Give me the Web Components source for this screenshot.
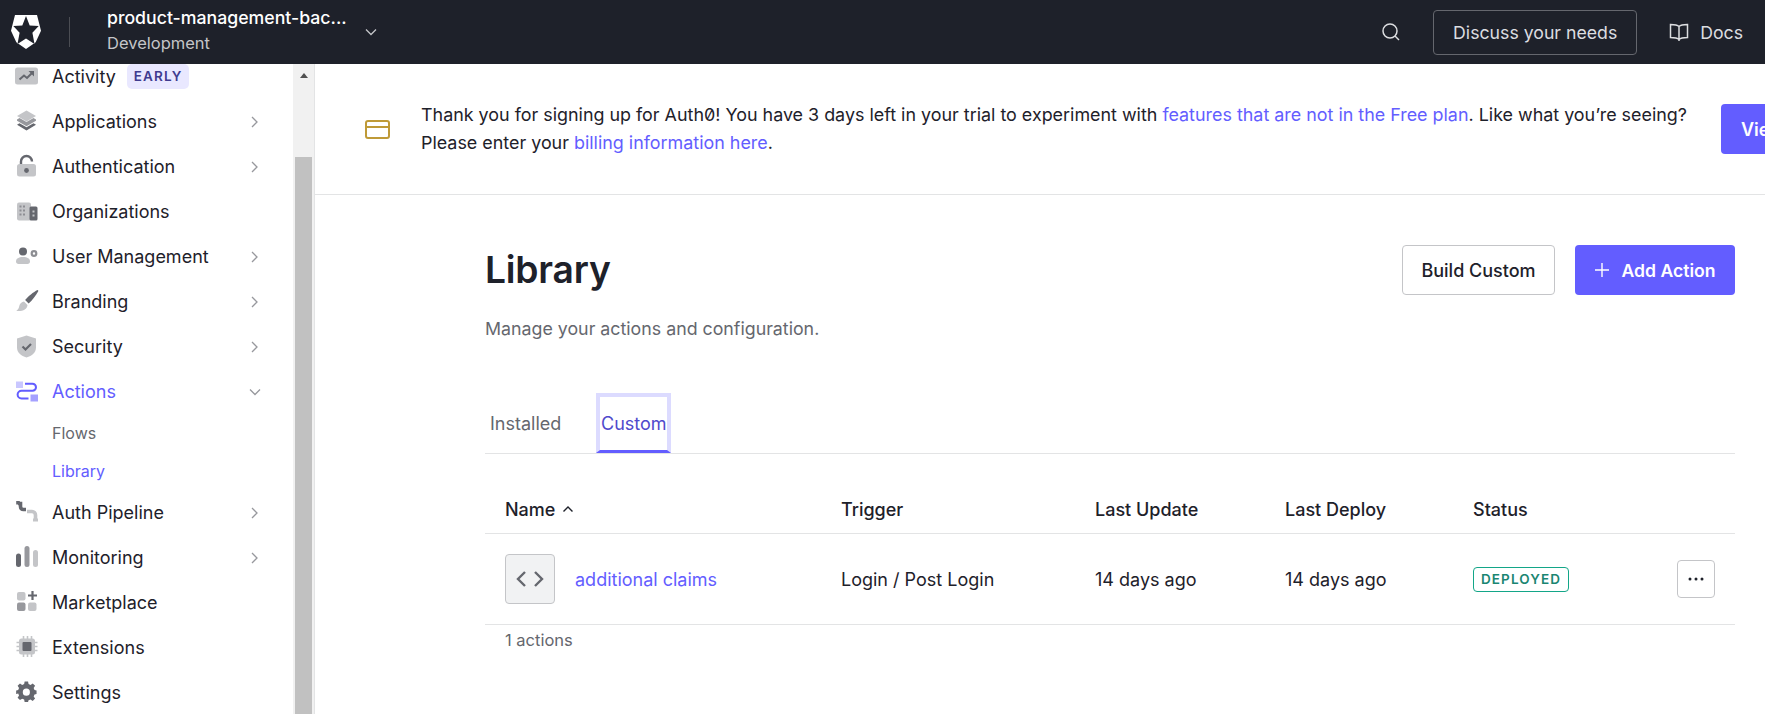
<!doctype html>
<html lang="en">
<head>
<meta charset="utf-8">
<title>Library</title>
<style>
  html, body { margin: 0; height: 100%; overflow: hidden; }
  body { font-family: Inter, "Liberation Sans", sans-serif; color: #1e212a; background: #fff; }
  #app { display: flex; flex-direction: column; height: 714px; }
  #below { display: flex; flex: 1; min-height: 0; }
</style>
</head>
<body>
<div id="app">
  <top-bar></top-bar>
  <div id="below">
    <side-bar>
      <nav-item icon="activity">Activity<nav-badge slot="extra">EARLY</nav-badge></nav-item>
      <nav-item icon="apps" arrow="right">Applications</nav-item>
      <nav-item icon="lock" arrow="right">Authentication</nav-item>
      <nav-item icon="orgs">Organizations</nav-item>
      <nav-item icon="users" arrow="right">User Management</nav-item>
      <nav-item icon="brush" arrow="right">Branding</nav-item>
      <nav-item icon="shield" arrow="right">Security</nav-item>
      <nav-item icon="actions" arrow="down" active>Actions</nav-item>
      <nav-sub>Flows</nav-sub>
      <nav-sub active>Library</nav-sub>
      <nav-item icon="pipe" arrow="right">Auth Pipeline</nav-item>
      <nav-item icon="bars" arrow="right">Monitoring</nav-item>
      <nav-item icon="market">Marketplace</nav-item>
      <nav-item icon="chip">Extensions</nav-item>
      <nav-item icon="gear">Settings</nav-item>
    </side-bar>
    <main-area>
      <trial-banner></trial-banner>
      <library-page></library-page>
    </main-area>
  </div>
</div>

<script>
const ICONS = {
  activity: `<g transform="translate(-1 1.500)"><rect x="0" y="1" width="23" height="17" rx="2.500" fill="#c4c5c8"/><path d="M4.500 13l4.500-4 3 2.500 5-5" fill="none" stroke="#65676e" stroke-width="2"/><path d="M13.500 4.500h5.500v5.500z" fill="#65676e"/></g>`,
  apps: `<g transform="translate(-1 .500)"><path d="M11.500 0l9.500 5.500-9.500 5.500L2 5.500z" fill="#c4c5c8"/><path d="M4.500 7.500l7 4 7-4 2.500 1.500 0 1.200-9.500 5.500L2 10.200V9z" fill="#97989d"/><path d="M4.500 12.800l7 4 7-4 2.500 1.500-9.500 5.700L2 14.300z" fill="#65676e"/></g>`,
  lock: `<g transform="translate(-1 0)"><rect x="2" y="9" width="19" height="12.500" rx="2.500" fill="#c4c5c8"/><path d="M6 9V6.500a5.500 5.500 0 0 1 11 0" fill="none" stroke="#65676e" stroke-width="2.400"/><circle cx="11.500" cy="15.500" r="2.400" fill="#65676e"/></g>`,
  orgs: `<g transform="translate(-.500 2.500)"><rect x="1.500" y="0" width="14" height="18" rx="2" fill="#c4c5c8"/><rect x="14" y="4" width="8" height="14" rx="1.500" fill="#65676e"/><g fill="#8d8e93"><rect x="4" y="3" width="2" height="2"/><rect x="7.500" y="3" width="2" height="2"/><rect x="4" y="7" width="2" height="2"/><rect x="7.500" y="7" width="2" height="2"/><rect x="4" y="11" width="2" height="2"/><rect x="7.500" y="11" width="2" height="2"/></g><rect x="17" y="8" width="2" height="2" fill="#c4c5c8"/><rect x="17" y="12" width="2" height="2" fill="#c4c5c8"/></g>`,
  users: `<g transform="translate(0 2)"><circle cx="7" cy="4.500" r="4" fill="#65676e"/><path d="M0 14.500c0-3 2.500-4.500 7-4.500s7 1.500 7 4.500c0 1.500-1 2.500-2.500 2.500h-9C1 17 0 16 0 14.500z" fill="#c4c5c8"/><circle cx="18" cy="6.500" r="2.300" fill="none" stroke="#8d8e93" stroke-width="2.200"/></g>`,
  brush: `<path d="M21.500 0c.8 0 1 .8.6 1.500-2 3.800-6 9-9.500 12l-3.500-3.500C12 6.500 17.500 2 21.500 0z" fill="#65676e"/><path d="M8 11.500l3.500 3.500c-.5 4.500-4.500 6.500-11.200 6 2-1.500 2.500-3 3-5 .5-2.500 2.500-4.300 4.700-4.500z" fill="#c4c5c8"/>`,
  shield: `<g transform="translate(-1 .500)"><path d="M11.500 0l9.500 3v9c0 5-4 8.500-9.500 10C6 20.500 2 17 2 12V3z" fill="#c4c5c8"/><path d="M7.500 11l3 3 5.500-5.500" fill="none" stroke="#65676e" stroke-width="2.200"/></g>`,
  actions: `<g transform="translate(0 1.500)"><rect x="0" y="0" width="7" height="6.500" fill="#c9c7ff"/><rect x="14.500" y="13" width="7.500" height="7" fill="#a5a1ff"/><path d="M9 2.200h7.500a3.300 3.300 0 0 1 0 7H5.500a3.700 3.700 0 0 0 0 7.800h7" fill="none" stroke="#635dff" stroke-width="2"/></g>`,
  pipe: `<path d="M2 0v3.500M2 2.500h2.500v3c0 2 1 3 3 3h2.500" fill="none" stroke="#65676e" stroke-width="3.600"/><path d="M11 10.500h5c2 0 3.500 1.500 3.500 3.500v5" fill="none" stroke="#c4c5c8" stroke-width="3.600"/><rect x="17" y="17.500" width="5" height="3" fill="#c4c5c8"/>`,
  bars: `<rect x="0" y="7.500" width="5" height="13.500" rx="2.500" fill="#65676e"/><rect x="8.500" y="0" width="5" height="21" rx="2.500" fill="#97989d"/><rect x="17" y="4" width="5" height="17" rx="2.500" fill="#c4c5c8"/>`,
  market: `<rect x="1" y="1" width="8.500" height="8.500" rx="2" fill="#c4c5c8"/><path d="M16.500 0v9M12 4.500h9" stroke="#65676e" stroke-width="2.200"/><rect x="1" y="11.500" width="8.500" height="8.500" rx="2" fill="#97989d"/><rect x="12" y="11.500" width="8.500" height="8.500" rx="2" fill="#c4c5c8"/>`,
  chip: `<g stroke="#c4c5c8" stroke-width="1.600"><path d="M7 0v21M11 0v21M15 0v21M0 6.500h21M0 10.500h21M0 14.500h21" transform="translate(.5 0)"/></g><rect x="3" y="2.500" width="16" height="16" rx="2.500" fill="#c4c5c8"/><rect x="6.500" y="6" width="9" height="9" rx="1" fill="#65676e"/>`,
  gear: `<path fill="#65676e" fill-rule="evenodd" d="M9 0h4l.6 3 2.300 1 2.600-1.700 2.800 2.800L19.600 7.700l1 2.300 2.400.6v4l-2.400.6-1 2.300 1.700 2.600-2.800 2.800-2.600-1.700-2.300 1L13 24H9l-.6-2.800-2.300-1-2.600 1.700-2.800-2.800 1.700-2.600-1-2.300L-1 14.600v-4l2.400-.6 1-2.300L.7 5.100l2.800-2.800 2.600 1.700 2.300-1zM11 8.300a4.200 4.200 0 1 0 0 8.400 4.200 4.200 0 0 0 0-8.400z" transform="translate(1 .5) scale(.85)"/>`,
};

class TopBar extends HTMLElement {
  constructor() {
    super();
    this.attachShadow({ mode: "open" });
  }

  connectedCallback() {
    this.shadowRoot.innerHTML = `
      <style>
        :host { display: flex; align-items: center; flex: none; height: 64px; background: #1e212a; color: #fff; font-size: 17.700px; }
        .logo { margin-left: 11px; width: 30px; height: 34px; display: block; }
        .sep { width: 1px; height: 30px; background: #4b4d53; margin: 0 37px 0 28px; }
        .tenant { display: flex; flex-direction: column; gap: 1px; width: 246px; margin-bottom: 4px; white-space: nowrap; }
        .name { font-weight: 500; line-height: 24px; }
        .env { font-size: 16.500px; line-height: 24px; color: #c4c5c8; }
        .caret { margin-left: 11px; }
        .spacer { flex: 1; }
        .discuss { box-sizing: border-box; height: 45px; width: 204px; display: flex; align-items: center; justify-content: center; border: 1px solid #65676e; border-radius: 4px; color: #dcdde0; margin: 0 32px 0 32px; }
        .docs { display: flex; align-items: center; gap: 11px; color: #dcdde0; margin-right: 22px; }
      </style>
      <svg class="logo" viewBox="0 0 30 34"><path fill="#fff" fill-rule="evenodd" d="M4 0h22l4 15.700-5.300 11.600L15 34 5.300 27.300 0 15.700zM15 1L11.300 10.500 2.300 11 8.600 17.800 6.500 29 15 23.500 23.500 29 21.400 17.800 27.700 11 18.700 10.500z"/></svg>
      <span class="sep"></span>
      <div class="tenant">
        <span class="name">product-management-bac...</span>
        <span class="env">Development</span>
      </div>
      <svg class="caret" width="14" height="14" viewBox="0 0 14 14" fill="none" stroke="#c4c5c8" stroke-width="1.300"><path d="M2 4.500l5 5 5-5"/></svg>
      <span class="spacer"></span>
      <svg width="20" height="20" viewBox="0 0 20 20" fill="none" stroke="#dcdde0" stroke-width="1.500"><circle cx="9" cy="9" r="7"/><path d="M14 14l4 4"/></svg>
      <span class="discuss">Discuss your needs</span>
      <span class="docs">
        <svg width="20" height="19" viewBox="0 0 20 19" fill="none" stroke="#dcdde0" stroke-width="1.500"><path d="M10 3.500C8.500 2 6 1.500 1.500 1.500v13c4.500 0 7 .5 8.500 2 1.500-1.500 4-2 8.500-2v-13C14 1.500 11.500 2 10 3.500zM10 3.500V18"/></svg>
        Docs
      </span>
    `;
  }
}

class SideBar extends HTMLElement {
  constructor() {
    super();
    this.attachShadow({ mode: "open" });
  }

  connectedCallback() {
    this.shadowRoot.innerHTML = `
      <style>
        :host { display: flex; flex: none; width: 314px; border-right: 1px solid #e3e4e5; overflow: hidden; }
        .list { flex: 1; display: flex; flex-direction: column; margin-top: -10px; min-width: 0; }
        .track { flex: none; width: 21px; background: #f1f1f1; display: flex; flex-direction: column; align-items: center; }
        .up { width: 0; height: 0; border: 4.500px solid transparent; border-top: 0; border-bottom: 5px solid #505050; margin-top: 9px; }
        .thumb { width: 17px; flex: 1; margin-top: 79px; background: #c1c1c1; }
      </style>
      <div class="list"><slot></slot></div>
      <div class="track"><span class="up"></span><span class="thumb"></span></div>
    `;
  }
}

class NavItem extends HTMLElement {
  constructor() {
    super();
    this.attachShadow({ mode: "open" });
  }

  connectedCallback() {
    const arrow = this.getAttribute("arrow");
    let chevron = "";
    if (arrow === "right") {
      chevron = `<path d="M3 1l5 5-5 5"/>`;
    } else if (arrow === "down") {
      chevron = `<path d="M1 3.500l5 5 5-5"/>`;
    }
    this.shadowRoot.innerHTML = `
      <style>
        :host { display: flex; align-items: center; flex: none; height: 45px; font-size: 18px; color: #1e212a; }
        :host([active]) { color: #635dff; }
        .icon { width: 23px; height: 23px; margin: 0 13px 0 16px; flex: none; overflow: visible; }
        .label { white-space: nowrap; }
        .grow { flex: 1; }
        .chev { flex: none; margin-right: 32px; }
      </style>
      <svg class="icon" viewBox="0 0 23 23">${ICONS[this.getAttribute("icon")] || ""}</svg>
      <span class="label"><slot></slot></span>
      <slot name="extra"></slot>
      <span class="grow"></span>
      <svg class="chev" width="12" height="12" viewBox="0 0 12 12" fill="none" stroke="#97989d" stroke-width="1.300">${chevron}</svg>
    `;
  }
}

class NavBadge extends HTMLElement {
  constructor() {
    super();
    this.attachShadow({ mode: "open" });
  }

  connectedCallback() {
    this.shadowRoot.innerHTML = `
      <style>
        :host { display: block; margin-left: 11px; padding: 0 7px; height: 25px; line-height: 25px; border-radius: 5px; background: #e9e8ff; color: #3f3b8f; font-size: 13.500px; font-weight: 600; letter-spacing: 1.100px; }
      </style>
      <slot></slot>
    `;
  }
}

class NavSub extends HTMLElement {
  constructor() {
    super();
    this.attachShadow({ mode: "open" });
  }

  connectedCallback() {
    this.shadowRoot.innerHTML = `
      <style>
        :host { display: flex; align-items: center; flex: none; height: 38px; padding-left: 52px; font-size: 16px; color: #65676e; }
        :host([active]) { color: #635dff; }
      </style>
      <slot></slot>
    `;
  }
}

class MainArea extends HTMLElement {
  constructor() {
    super();
    this.attachShadow({ mode: "open" });
  }

  connectedCallback() {
    this.shadowRoot.innerHTML = `
      <style>
        :host { display: block; flex: 1; min-width: 0; overflow: hidden; }
      </style>
      <slot></slot>
    `;
  }
}

class TrialBanner extends HTMLElement {
  constructor() {
    super();
    this.attachShadow({ mode: "open" });
  }

  connectedCallback() {
    this.shadowRoot.innerHTML = `
      <style>
        :host { display: flex; align-items: center; height: 130px; border-bottom: 1px solid #e3e4e5; padding-left: 50px; width: 1600px; font-size: 17.900px; line-height: 28px; }
        svg { flex: none; margin-right: 31px; }
        .text { flex: none; width: 1276px; }
        .line { display: block; white-space: nowrap; }
        a { color: #635dff; text-decoration: none; }
        .zero { font-feature-settings: "zero"; }
        button { flex: none; margin-left: 24px; height: 50px; width: 140px; border: 0; border-radius: 4px; background: #635dff; color: #fff; font: 600 18px Inter, sans-serif; text-align: left; padding-left: 20px; white-space: nowrap; }
      </style>
      <svg width="25" height="19" viewBox="0 0 25 19" fill="none" stroke="#bf9a37" stroke-width="2"><rect x="1" y="1" width="23" height="17" rx="2"/><path d="M1 7h23"/></svg>
      <div class="text">
        <span class="line">Thank you for signing up for Auth<span class="zero">0</span>! You have 3 days left in your trial to experiment with <a>features that are not in the Free plan</a>. Like what you’re seeing?</span>
        <span class="line">Please enter your <a>billing information here</a>.</span>
      </div>
      <button>View Plans</button>
    `;
  }
}

class LibraryPage extends HTMLElement {
  constructor() {
    super();
    this.attachShadow({ mode: "open" });
  }

  connectedCallback() {
    this.shadowRoot.innerHTML = `
      <style>
        :host { display: block; padding: 50px 30px 0 170px; font-size: 18px; color: #1e212a; }
        .head { display: flex; align-items: center; gap: 20px; height: 50px; }
        h1 { margin: 0; flex: 1; font-size: 37.200px; font-weight: 600; line-height: 50px; letter-spacing: -.2px; }
        .btn { box-sizing: border-box; height: 50px; display: flex; align-items: center; justify-content: center; border-radius: 4px; font-weight: 500; }
        .ghost { width: 153px; border: 1px solid #c4c5c8; }
        .solid { width: 160px; gap: 13px; background: #635dff; color: #fff; font-size: 17.600px; font-weight: 600; }
        .desc { margin: 22px 0 0; font-size: 17.800px; line-height: 24px; color: #65676e; }
        .tabs { display: flex; margin-top: 52px; height: 60px; border-bottom: 1px solid #e3e4e5; }
        .tab { display: flex; align-items: center; box-sizing: border-box; height: 60px; padding: 0 5px; color: #65676e; }
        .tab.on { margin-left: 30px; padding: 0; width: 75px; justify-content: center; border: 4px solid #dcdbff; border-bottom: 3px solid #635dff; color: #4f49cc; }
        .grid { display: grid; grid-template-columns: 336px 254px 190px 188px 1fr; padding-left: 20px; align-items: center; }
        .header { height: 48px; margin-top: 31px; border-bottom: 1px solid #e3e4e5; font-weight: 500; }
        .sort { display: flex; align-items: center; gap: 7px; }
        .row { height: 90px; border-bottom: 1px solid #e3e4e5; }
        .name { display: flex; align-items: center; gap: 20px; color: #635dff; }
        .code { box-sizing: border-box; width: 50px; height: 50px; display: flex; align-items: center; justify-content: center; background: #f1f2f3; border: 1px solid #c4c5c8; border-radius: 4px; }
        .status { display: flex; align-items: center; justify-content: space-between; padding-right: 20px; }
        .badge { box-sizing: border-box; height: 25px; width: 96px; display: flex; align-items: center; justify-content: center; border: 1.500px solid #13a688; border-radius: 4px; color: #1b8672; font-size: 13.500px; font-weight: 600; letter-spacing: 1.100px; }
        .more { box-sizing: border-box; width: 38px; height: 38px; display: flex; align-items: center; justify-content: center; border: 1px solid #c4c5c8; border-radius: 4px; }
        .count { padding: 4px 0 0 20px; font-size: 16.500px; line-height: 22px; color: #65676e; }
      </style>
      <div class="head">
        <h1>Library</h1>
        <span class="btn ghost">Build Custom</span>
        <span class="btn solid">
          <svg width="14" height="14" viewBox="0 0 14 14" stroke="#fff" stroke-width="1.400"><path d="M7 0v14M0 7h14"/></svg>
          Add Action
        </span>
      </div>
      <p class="desc">Manage your actions and configuration.</p>
      <div class="tabs">
        <span class="tab">Installed</span>
        <span class="tab on">Custom</span>
      </div>
      <div class="grid header">
        <span class="sort">Name <svg width="12" height="8" viewBox="0 0 12 8" fill="none" stroke="#1e212a" stroke-width="1.400"><path d="M1.500 6.500L6 2l4.500 4.500"/></svg></span>
        <span>Trigger</span>
        <span>Last Update</span>
        <span>Last Deploy</span>
        <span>Status</span>
      </div>
      <div class="grid row">
        <span class="name">
          <span class="code"><svg width="28" height="18" viewBox="0 0 28 18" fill="none" stroke="#65676e" stroke-width="2.400"><path d="M9 2L2 9l7 7M19 2l7 7-7 7"/></svg></span>
          additional claims
        </span>
        <span>Login / Post Login</span>
        <span>14 days ago</span>
        <span>14 days ago</span>
        <span class="status">
          <span class="badge">DEPLOYED</span>
          <span class="more"><svg width="16" height="4" viewBox="0 0 16 4" fill="#1e212a"><circle cx="2" cy="2" r="1.500"/><circle cx="8" cy="2" r="1.500"/><circle cx="14" cy="2" r="1.500"/></svg></span>
        </span>
      </div>
      <div class="count">1 actions</div>
    `;
  }
}

customElements.define("top-bar", TopBar);
customElements.define("side-bar", SideBar);
customElements.define("nav-item", NavItem);
customElements.define("nav-badge", NavBadge);
customElements.define("nav-sub", NavSub);
customElements.define("main-area", MainArea);
customElements.define("trial-banner", TrialBanner);
customElements.define("library-page", LibraryPage);
</script>
</body>
</html>
